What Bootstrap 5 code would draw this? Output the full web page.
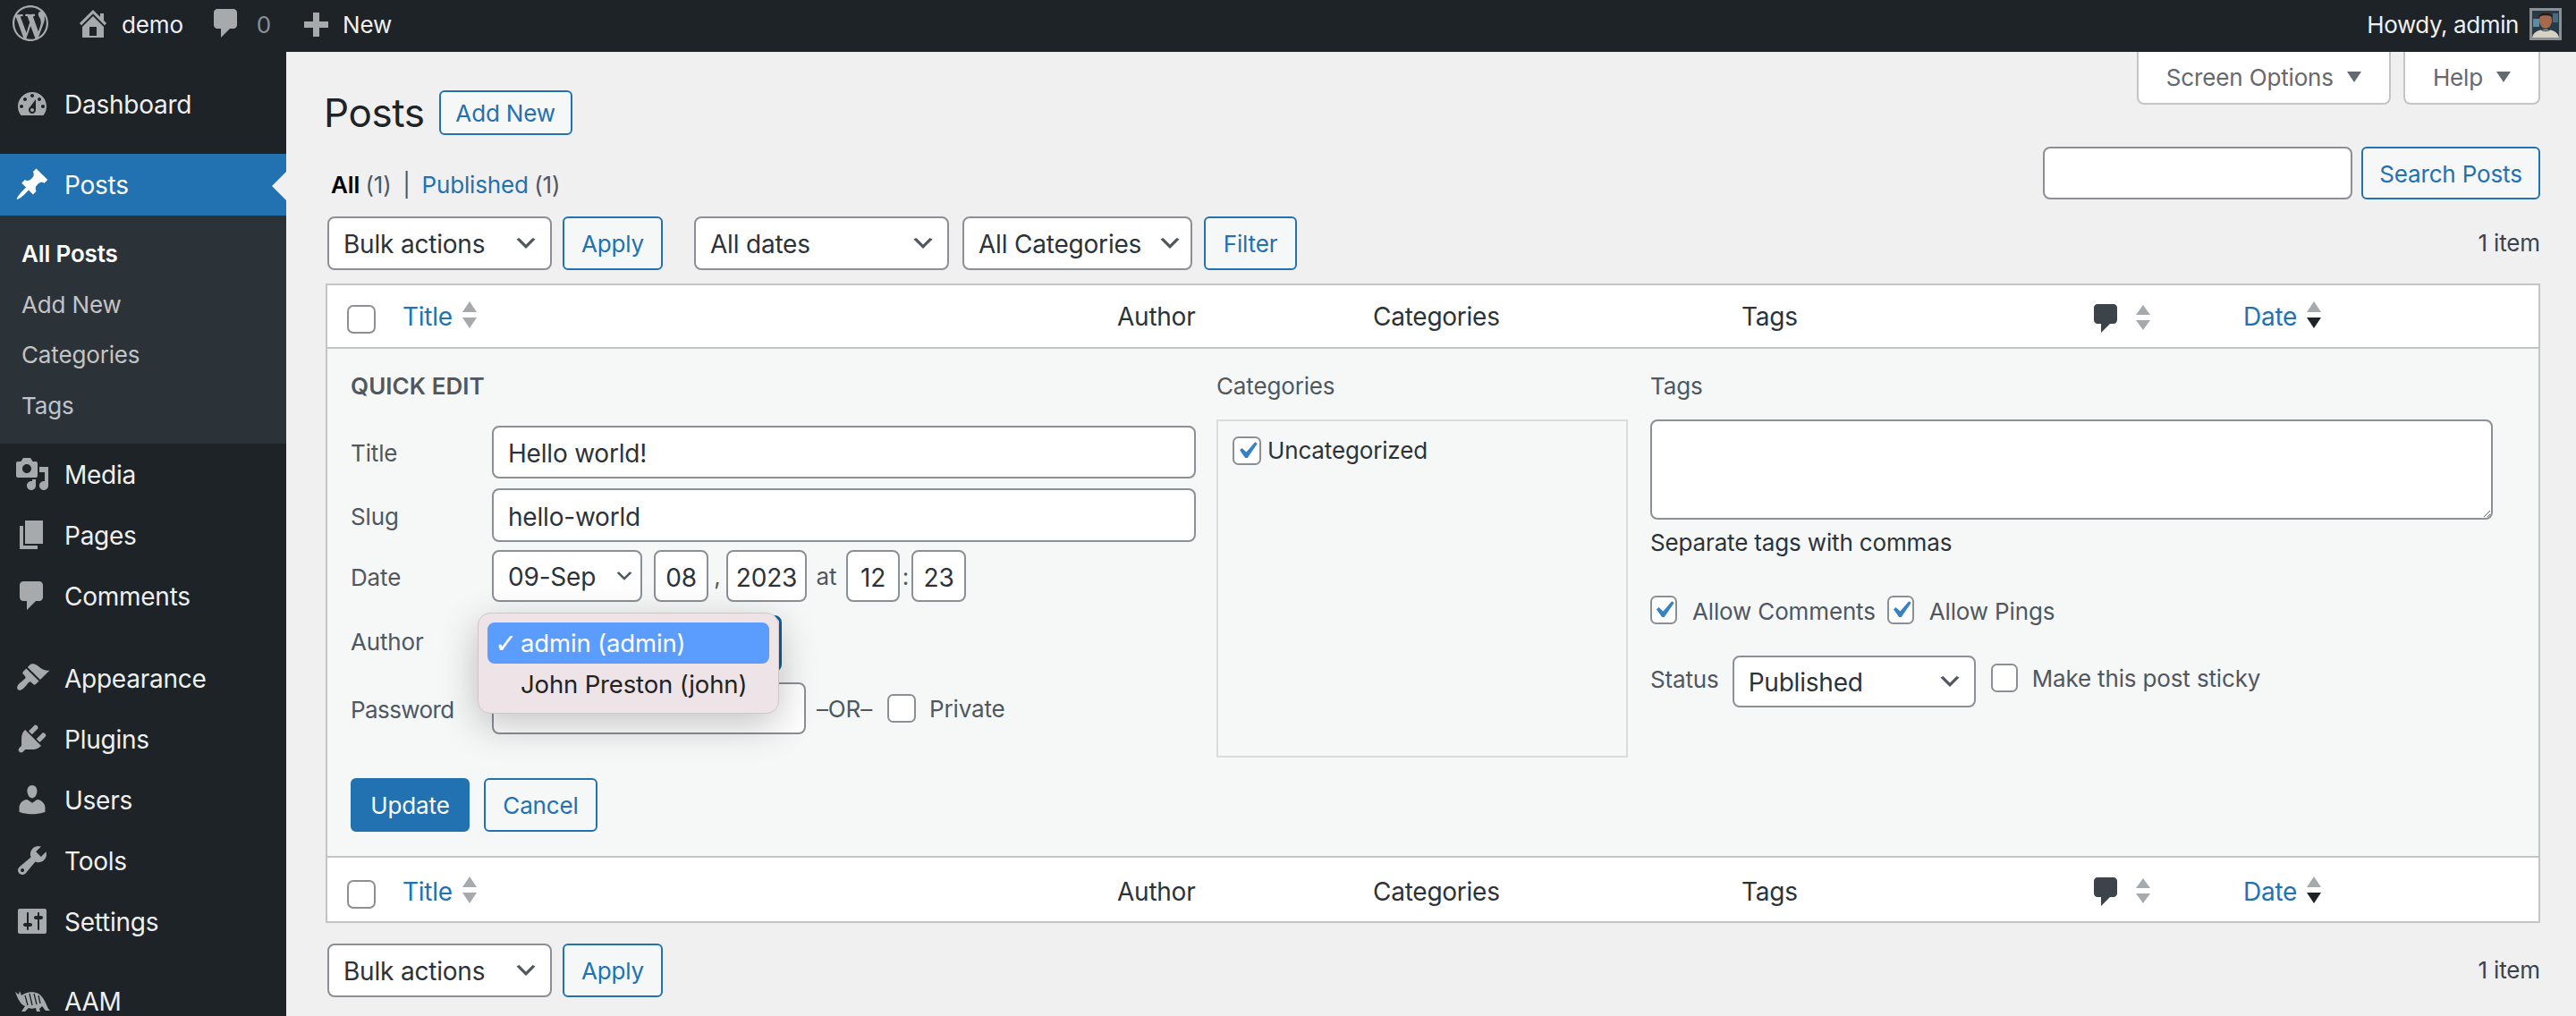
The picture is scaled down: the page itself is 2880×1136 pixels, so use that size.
<!doctype html>
<html lang="en">
<head>
<meta charset="utf-8">
<title>Posts</title>
<link href="https://cdn.jsdelivr.net/npm/bootstrap@5.3.0/dist/css/bootstrap.min.css" rel="stylesheet">
<style>
html,body{height:1136px;overflow:hidden}
body{font-family:Inter,"Liberation Sans",sans-serif;font-size:26px;line-height:32px;letter-spacing:-.15px;background:#f0f0f1;color:#3c434a}
a{text-decoration:none;color:#2271b1}
.adminbar{height:58px;background:#1d2327;color:#f0f0f1;padding-bottom:3px}
.adminbar svg{fill:#a7aaad;flex:none}
.ab-logo{margin-left:14px}.ab-home{margin-left:30px}.ab-demo{margin-left:12px}.ab-com{margin-left:28px}.ab-zero{margin-left:14px;color:#8c8f94}.ab-plus{margin-left:37px}.ab-new{margin-left:16px}
.ab-howdy{letter-spacing:-.4px}
.ab-avatar{margin:-2px 16px 0 12px}
.ab-logo,.ab-home,.ab-com{margin-top:-3px}
.layout{height:1078px}
.sidebar{width:320px;background:#1d2327;padding-top:25px;flex:none;overflow:hidden}
.menu-row{height:68px;color:#f0f0f1;padding-left:72px;position:relative;font-size:28px;letter-spacing:-.25px}
.menu-row span{display:block;padding-top:19px}
.menu-row:first-child span{padding-top:18px}
.menu-row svg{position:absolute;left:16px;top:14px;fill:#a7aaad}
.menu-row.active{height:69px;background:#2271b1;color:#fff;margin-top:21px}
.menu-row.active svg{fill:#fff;top:14px}
.menu-row.active::after{content:"";position:absolute;right:0;top:20px;border:16px solid transparent;border-right-color:#f0f0f1;border-left:0}
.submenu{background:#2c3338;padding:15px 0 13px 24px}
.submenu a{display:block;height:56.7px;line-height:56px;color:#c3c4c7}
.submenu a.current{color:#fff;font-weight:600}
.m-gap{margin-top:24px}.m-gap2{margin-top:21px}
.main{padding:0 40px 0 44px;min-width:0}
.tabs{gap:14px}
.tab{height:59px;background:#fff;border:2px solid #c3c4c7;border-top:0;border-radius:0 0 8px 8px;color:#646970;padding:0 31px;gap:15px}
.tab i{width:0;height:0;border:8px solid transparent;border-top:12px solid #646970;border-bottom:0;margin-top:-2px}
h1.page{font-size:44px;font-weight:400;line-height:50px;margin:0 0 0 -2px;color:#1d2327;letter-spacing:-.4px}
.title-row{margin-top:43px;gap:16px;height:50px}
.btn.btn-wp{--bs-btn-font-size:26px;--bs-btn-line-height:32px;--bs-btn-color:#2271b1;--bs-btn-bg:#f6f7f7;--bs-btn-border-color:#2271b1;--bs-btn-border-width:2px;--bs-btn-border-radius:6px;--bs-btn-hover-color:#135e96;--bs-btn-hover-bg:#f0f0f1;--bs-btn-hover-border-color:#135e96;display:inline-flex;align-items:center;justify-content:center;flex:none;padding:2px 0 0;letter-spacing:-.15px}
.btn.btn-wp.solid{--bs-btn-color:#fff;--bs-btn-bg:#2271b1;--bs-btn-hover-color:#fff;--bs-btn-hover-bg:#135e96}
.w-addnew{width:149px;height:50px}
.search-row{margin-top:13px;height:59px}
.views{margin:27px 0 0 6px;color:#50575e;white-space:pre;word-spacing:-.8px}
.views b{color:#000;font-weight:600}
.search-row .form-control{width:346px;height:59px}
.btn.btn-wp.w-search{width:200px;height:59px;margin-left:10px}
.form-control,.form-select{font-size:28px;line-height:32px;letter-spacing:-.2px;color:#2c3338;border:2px solid #8c8f94;border-radius:8px;padding:3px 16px 0;background-color:#fff;box-shadow:none}
.form-select{padding:1px 48px 0 16px;background-image:url("data:image/svg+xml,%3Csvg xmlns='http://www.w3.org/2000/svg' viewBox='0 0 20 20'%3E%3Cpath fill='%2350575e' d='M5 6l5 5 5-5 2 1-7 7-7-7 2-1z'/%3E%3C/svg%3E");background-size:30px 30px;background-position:right 12px center}
.tablenav{height:60px;align-items:stretch;padding-left:2px}
.tablenav.top{margin-top:19px}
.tablenav.bottom{margin-top:23px}
.w-bulk{width:251px;margin-right:12px}.btn.btn-wp.w-apply{width:112px}
.w-dates{width:285px;margin-left:35px;margin-right:15px}.form-select.w-cats{width:257px;margin-right:13px;padding-right:20px;background-position:right 8px center}.btn.btn-wp.w-filter{width:104px}
.items{margin-left:auto;align-self:center;color:#3c434a}
.wp-list{margin-top:15px;border:2px solid #c3c4c7;background:#fff}
.wp-list table{margin:0;table-layout:fixed;width:100%;--bs-table-bg:transparent;--bs-table-color:#2c3338}
.wp-list th{font-weight:400;font-size:28px;letter-spacing:-.25px;padding:0 0 0 14px;vertical-align:middle;border-bottom:0;height:69px;white-space:nowrap}
.wp-list tfoot th{height:71px;padding-top:4px}
.wp-list th a{display:inline-flex;align-items:center;gap:11px}
.sort{fill:#a7aaad;width:16px;height:30px;flex:none;margin-top:-4px}
.sort .on{fill:#1d2327}
.c-cb{width:70px}.c-title{width:799px}.c-author{width:286px}.c-cats{width:412px}.c-tags{width:393px}.c-com{width:168px}
.wp-list th.cb{padding-left:22px}
th.cb input{margin:6px 0 0}
.wp-list th.com{padding:11px 0 0 15px}
.wp-list tfoot th.com{padding-top:11px}
.com-wrap{gap:21px}
.form-check-input{width:32px;height:32px;border:2px solid #8c8f94;border-radius:8px;background-color:#fff;margin:0;flex:none}
.form-check-input:checked{background-color:#fff;border-color:#8c8f94;background-image:url("data:image/svg+xml,%3Csvg xmlns='http://www.w3.org/2000/svg' viewBox='0 0 20 20'%3E%3Cpath fill='%233582c4' d='M14.83 4.89l1.34.94-5.81 8.38H9.02L5.78 9.67l1.34-1.25 2.57 2.4z'/%3E%3C/svg%3E");background-size:38px 38px;background-position:center}
.com-ico{fill:#3c434a}
.qe{background:#f6f7f7;border-top:2px solid #c3c4c7;border-bottom:2px solid #c3c4c7;padding:26px 51px 27px 26px}
.qe-head{height:32px;color:#50575e}
.qe-title{font-size:26px;font-weight:600;text-transform:uppercase;color:#50575e;letter-spacing:.05px}
.qe-left{width:945px;flex:none}
.qe-cats{width:460px;flex:none;margin-left:23px}
.qe-tags{width:942px;flex:none;margin-left:25px}
.qe-row{align-items:center;position:relative}
.qe-row>label{width:158px;flex:none;color:#50575e;padding-top:3px}
.r-title{margin-top:28px;height:59px}.r-slug{margin-top:11px;height:60px}.r-date{margin-top:9px;height:58px}.r-author{margin-top:15px;height:63px}.r-pass{margin-top:12px;height:58px}
.r-author>label{padding-top:0;margin-top:-3px}
.r-pass>label{letter-spacing:-.6px}
.qe-row .form-control{height:100%}
.form-control.date-box{padding:3px 0 0;text-align:center;flex:none;width:61px}
.form-control.w-08{margin-left:13px}
.form-control.w-year{width:90px}
.form-control.w-hour{width:60px}
.form-select.sel-date{width:168px;height:58px;flex:none;padding:2px 24px 0 16px;background-position:right 6px center;background-size:24px 24px}
.sep{color:#50575e;flex:none;text-align:center;padding-top:2px}
.sep-comma{width:20px}.sep-at{width:44px}.sep-colon{width:13px}
.sel-author{width:324px;height:63px;border:3px solid #135e96}
.author-menu{position:absolute;left:142px;top:-3px;width:337px;height:113px;background:#eee4e7;border:1px solid #cfc8ca;border-radius:14px;padding:10px;box-shadow:0 12px 44px rgba(0,0,0,.24);font-size:27.5px;--bs-dropdown-min-width:0}
.author-menu .dropdown-item{height:46px;line-height:46px;padding:0 0 0 37px;border-radius:8px;color:#222;position:relative;letter-spacing:-.15px}
.author-menu .dropdown-item.active{background:#5b9dff;color:#fff}
.author-menu .dropdown-item.active::before{content:"\2713";position:absolute;left:8px;top:1px;font-size:30px;font-family:"DejaVu Sans",sans-serif;font-weight:700}
.author-menu .dropdown-item+.dropdown-item{margin-top:-1px}
.pw-input.form-control{width:351px;flex:none}
.or{margin-left:12px}
.cb-private{margin-left:17px}
.lbl-private{margin-left:15px}
.qe-actions{margin-top:49px;gap:16px;height:60px}
.btn.btn-wp.w-update{width:133px}.btn.btn-wp.w-cancel{width:127px}
.cat-box{margin-top:21px;height:378px;border:2px solid #dcdcde;padding:17px 16px;gap:7px;color:#2c3338}
.qe-tags .form-control{height:112px;display:block;margin-top:21px;padding:0 10px;width:100%}
.sep-note{margin-top:10px;color:#2c3338;height:32px}
.allow{margin-top:43px;gap:13px;color:#50575e;height:32px}
.allow input{width:30px}
.allow label{margin:3px 0 0 17px}
.status{margin-top:35px;height:58px;color:#50575e}
.status .form-select{width:272px;height:58px;margin-left:15px;flex:none}
.status input{width:30px;margin:-8px 16px 0 17px}
.status label{margin-top:-6px}
.status>span{margin-top:-4px}
</style>
</head>
<body>
<header class="adminbar d-flex align-items-center">
  <svg class="ab-logo" width="40" height="40" viewBox="0 0 20 20"><path d="M20 10c0-5.51-4.49-10-10-10C4.48 0 0 4.49 0 10c0 5.52 4.48 10 10 10 5.51 0 10-4.48 10-10zM7.78 15.37L4.37 6.22c.55-.02 1.17-.08 1.17-.08.5-.06.44-1.13-.06-1.11 0 0-1.45.11-2.37.11-.18 0-.37 0-.58-.01C4.12 2.69 6.87 1.11 10 1.11c2.33 0 4.45.87 6.05 2.34-.68-.11-1.65.39-1.65 1.58 0 .74.45 1.36.9 2.1.35.61.55 1.36.55 2.46 0 1.49-1.4 5-1.4 5l-3.03-8.37c.54-.02.82-.17.82-.17.5-.05.44-1.25-.06-1.22 0 0-1.44.12-2.38.12-.87 0-2.33-.12-2.33-.12-.5-.03-.56 1.2-.06 1.22l.92.08 1.26 3.41zM17.41 10c.24-.64.74-1.87.43-4.25.7 1.29 1.05 2.71 1.05 4.25 0 3.29-1.73 6.24-4.4 7.78.97-2.59 1.94-5.2 2.92-7.78zM6.1 18.09C3.12 16.65 1.11 13.53 1.11 10c0-1.3.23-2.48.72-3.59C3.25 10.3 4.67 14.2 6.1 18.09zm4.03-6.63l2.58 6.98c-.86.29-1.76.45-2.71.45-.79 0-1.57-.11-2.29-.33.81-2.38 1.62-4.74 2.42-7.1z"/></svg>
  <svg class="ab-home" width="40" height="40" viewBox="0 0 20 20"><path fill-rule="evenodd" d="M16 8.5l1.53 1.53-1.06 1.06L10 4.62l-6.47 6.47-1.06-1.06L10 2.5l4 4v-2h2v4zM10 6.04l6 5.99V18H4v-5.97zM12 17v-5H8v5h4z"/></svg>
  <span class="ab-demo">demo</span>
  <svg class="ab-com" width="40" height="40" viewBox="0 0 20 20"><path d="M5 2h9c1.1 0 2 .9 2 2v7c0 1.1-.9 2-2 2h-2l-5 5v-5H5c-1.1 0-2-.9-2-2V4c0-1.1.9-2 2-2z"/></svg>
  <span class="ab-zero">0</span>
  <svg class="ab-plus" width="27" height="27" viewBox="0 0 27 27"><path d="M10 0h7v10h10v7H17v10h-7V17H0v-7h10z"/></svg>
  <span class="ab-new">New</span>
  <span class="ms-auto ab-howdy">Howdy, admin</span>
  <svg class="ab-avatar" width="36" height="36" viewBox="0 0 36 36"><rect width="36" height="36" fill="#8d9093"/><rect x="3" y="3" width="30" height="30" fill="#263a48"/><rect x="4" y="12" width="7" height="9" fill="#5d8ba3"/><rect x="26" y="6" width="6" height="10" fill="#4a6b7c"/><ellipse cx="18" cy="14" rx="7" ry="9" fill="#a8684c"/><path d="M10 11c0-7 15-8 16 0l-2-2c-3-1-9-1-12 0z" fill="#241a16"/><path d="M3 33c1-6 7-9 15-9s14 3 15 9z" fill="#d6d2c6"/><path d="M13 24c2 2 8 2 10 0" stroke="#222" fill="none"/></svg>
</header>
<div class="layout d-flex">
  <nav class="sidebar">
    <div class="menu-row"><svg width="40" height="40" viewBox="0 0 20 20"><path fill-rule="evenodd" d="M3.76 16h12.48c1.1-1.37 1.76-3.11 1.76-5 0-4.42-3.58-8-8-8s-8 3.58-8 8c0 1.89.66 3.63 1.76 5zM10 4c.55 0 1 .45 1 1s-.45 1-1 1-1-.45-1-1 .45-1 1-1zM6 6c.55 0 1 .45 1 1s-.45 1-1 1-1-.45-1-1 .45-1 1-1zm8 0c.55 0 1 .45 1 1s-.45 1-1 1-1-.45-1-1 .45-1 1-1zm-5.37 5.55L12 7v6c0 1.1-.9 2-2 2s-2-.9-2-2c0-.57.24-1.08.63-1.45zM4 10c.55 0 1 .45 1 1s-.45 1-1 1-1-.45-1-1 .45-1 1-1zm12 0c.55 0 1 .45 1 1s-.45 1-1 1-1-.45-1-1 .45-1 1-1zm-5 3c0-.55-.45-1-1-1s-1 .45-1 1 .45 1 1 1 1-.45 1-1z"/></svg><span>Dashboard</span></div>
    <div class="menu-row active"><svg width="40" height="40" viewBox="0 0 20 20"><path d="M10.44 3.02l1.82-1.82 6.36 6.35-1.83 1.82c-1.05-.68-2.48-.57-3.41.36l-.75.75c-.92.93-1.04 2.35-.35 3.41l-1.83 1.82-2.41-2.41-2.8 2.79c-.42.42-3.38 2.71-3.8 2.29s1.86-3.39 2.28-3.81l2.79-2.79L4.1 9.36l1.83-1.82c1.05.69 2.48.57 3.4-.36l.75-.75c.93-.92 1.05-2.35.36-3.41z"/></svg><span>Posts</span></div>
    <div class="submenu">
      <a class="current" href="#">All Posts</a>
      <a href="#">Add New</a>
      <a href="#">Categories</a>
      <a href="#">Tags</a>
    </div>
    <div class="menu-row"><svg width="40" height="40" viewBox="0 0 20 20"><path fill-rule="evenodd" d="M13 11V4c0-.55-.45-1-1-1h-1.67L9 1H5L3.67 3H2c-.55 0-1 .45-1 1v7c0 .55.45 1 1 1h10c.55 0 1-.45 1-1zM7 4.5c1.38 0 2.5 1.12 2.5 2.5S8.38 9.5 7 9.5 4.5 8.38 4.5 7 5.62 4.5 7 4.5zM14 6h5v10.5c0 1.38-1.12 2.5-2.5 2.5S14 17.88 14 16.5s1.12-2.5 2.5-2.5c.17 0 .34.02.5.05V9h-3V6zm-4 8.05V13h2v3.5c0 1.38-1.12 2.5-2.5 2.5S7 17.88 7 16.5 8.12 14 9.5 14c.17 0 .34.02.5.05z"/></svg><span>Media</span></div>
    <div class="menu-row"><svg width="40" height="40" viewBox="0 0 20 20"><path d="M6 15V2h10v13H6zm-1 1h8v2H3V5h2v11z"/></svg><span>Pages</span></div>
    <div class="menu-row"><svg width="40" height="40" viewBox="0 0 20 20"><path d="M5 2h9c1.1 0 2 .9 2 2v7c0 1.1-.9 2-2 2h-2l-5 5v-5H5c-1.1 0-2-.9-2-2V4c0-1.1.9-2 2-2z"/></svg><span>Comments</span></div>
    <div class="menu-row m-gap"><svg width="40" height="40" viewBox="0 0 20 20"><path d="M14.48 11.06L7.41 3.99l1.5-1.5c.5-.56 2.3-.47 3.51.32 1.21.8 1.43 1.28 2.91 2.1 1.18.64 2.45 1.26 4.45.85zm-.71.71L6.7 4.7 4.93 6.47c-.39.39-.39 1.02 0 1.41l1.06 1.06c.39.39.39 1.03 0 1.42-.6.6-2.47 1.99-3.33 2.85-.87.87-1.65 2.24-.66 3.23.99.99 2.36.21 3.23-.66.86-.86 2.25-2.73 2.85-3.33.39-.39 1.03-.39 1.42 0l1.06 1.06c.39.39 1.02.39 1.41 0z"/></svg><span>Appearance</span></div>
    <div class="menu-row"><svg width="40" height="40" viewBox="0 0 20 20"><path d="M13.11 4.36L9.87 7.6 8 5.73l3.24-3.24c.35-.34 1.05-.2 1.56.32.52.51.66 1.21.31 1.55zm-8 1.77l.91-1.12 9.01 9.01-1.19.84c-.71.71-2.63 1.16-3.82 1.16H6.14L4.9 17.26c-.59.59-1.54.59-2.12 0-.59-.58-.59-1.53 0-2.12l1.24-1.24v-3.88c0-1.13.4-3.19 1.09-3.89zm7.26 3.97l3.24-3.24c.34-.35 1.04-.21 1.55.31.52.51.66 1.21.31 1.55l-3.24 3.25z"/></svg><span>Plugins</span></div>
    <div class="menu-row"><svg width="40" height="40" viewBox="0 0 20 20"><path d="M10 9.25c-2.27 0-2.73-3.44-2.73-3.44C7 4.02 7.82 2 9.97 2c2.16 0 2.98 2.02 2.71 3.81 0 0-.41 3.44-2.68 3.44zm0 2.57L12.72 10c2.39 0 4.52 2.33 4.52 4.53v2.49s-3.65 1.13-7.24 1.13c-3.65 0-7.24-1.13-7.24-1.13v-2.49c0-2.25 1.94-4.48 4.47-4.48z"/></svg><span>Users</span></div>
    <div class="menu-row"><svg width="40" height="40" viewBox="0 0 20 20"><path fill-rule="evenodd" d="M16.68 9.77c-1.34 1.34-3.3 1.67-4.95.99l-5.41 6.52c-.99.99-2.59.99-3.58 0s-.99-2.59 0-3.57l6.52-5.42c-.68-1.65-.35-3.61.99-4.95 1.28-1.28 3.12-1.62 4.72-1.06l-2.89 2.89 2.82 2.82 2.86-2.87c.53 1.58.18 3.39-1.08 4.65zM3.81 16.21c.4.39 1.04.39 1.43 0 .4-.4.4-1.04 0-1.43-.39-.4-1.03-.4-1.43 0-.39.39-.39 1.03 0 1.43z"/></svg><span>Tools</span></div>
    <div class="menu-row"><svg width="40" height="40" viewBox="0 0 20 20"><path fill-rule="evenodd" d="M18 16V4c0-.55-.45-1-1-1H3c-.55 0-1 .45-1 1v12c0 .55.45 1 1 1h14c.55 0 1-.45 1-1zM8 11h1c.55 0 1 .45 1 1s-.45 1-1 1H8v1.5c0 .28-.22.5-.5.5s-.5-.22-.5-.5V13H6c-.55 0-1-.45-1-1s.45-1 1-1h1V5.5c0-.28.22-.5.5-.5s.5.22.5.5V11zm5-2h-1c-.55 0-1-.45-1-1s.45-1 1-1h1V5.5c0-.28.22-.5.5-.5s.5.22.5.5V7h1c.55 0 1 .45 1 1s-.45 1-1 1h-1v5.5c0 .28-.22.5-.5.5s-.5-.22-.5-.5V9z"/></svg><span>Settings</span></div>
    <div class="menu-row m-gap2"><svg width="40" height="40" viewBox="0 0 40 24"><path d="M3 7l-2-5 4 3 1-4 2 5c5-4 13-5 19-2 5 3 8 10 11 17l2 2h-5l-4-5-3 3 1 3h-4l-1-4c-3 1-6 1-8 0l-4 4H8l4-6c-3-1-6-4-9-11z"/><path d="M12 6l3 11M17 4l3 13M22 4l3 12M27 6l2 9" stroke="#1d2327" stroke-width="1.3" fill="none"/></svg><span>AAM</span></div>
  </nav>
  <main class="main flex-grow-1">
    <div class="tabs d-flex float-end">
      <a class="tab d-flex align-items-center" href="#">Screen Options<i></i></a>
      <a class="tab d-flex align-items-center" href="#">Help<i></i></a>
    </div>
    <div class="title-row d-flex align-items-center">
      <h1 class="page">Posts</h1>
      <a class="btn btn-wp w-addnew" href="#">Add New</a>
    </div>
    <div class="search-row d-flex justify-content-between">
      <div class="views"><b>All</b> (1)  |  <a href="#">Published</a> (1)</div>
      <div class="d-flex">
        <input class="form-control" type="search" aria-label="Search">
        <button class="btn btn-wp w-search" type="button">Search Posts</button>
      </div>
    </div>
    <div class="tablenav top d-flex">
      <select class="form-select w-bulk"><option>Bulk actions</option></select>
      <button class="btn btn-wp w-apply" type="button">Apply</button>
      <select class="form-select w-dates"><option>All dates</option></select>
      <select class="form-select w-cats"><option>All Categories</option></select>
      <button class="btn btn-wp w-filter" type="button">Filter</button>
      <span class="items">1 item</span>
    </div>
    <div class="wp-list">
      <table class="table">
        <colgroup><col class="c-cb"><col class="c-title"><col class="c-author"><col class="c-cats"><col class="c-tags"><col class="c-com"><col></colgroup>
        <thead>
          <tr>
            <th class="cb"><input class="form-check-input" type="checkbox" aria-label="Select all"></th>
            <th><a href="#">Title <svg class="sort" viewBox="0 0 16 30"><path d="M8 0l8 12H0zM0 18h16l-8 12z"/></svg></a></th>
            <th>Author</th><th>Categories</th><th>Tags</th>
            <th class="com"><span class="d-inline-flex align-items-center com-wrap"><svg class="com-ico" width="26" height="32" viewBox="3 2 13 16"><path d="M5 2h9c1.1 0 2 .9 2 2v7c0 1.1-.9 2-2 2h-2l-5 5v-5H5c-1.1 0-2-.9-2-2V4c0-1.1.9-2 2-2z"/></svg><svg class="sort" viewBox="0 0 16 30"><path d="M8 2l8 11H0zM0 19h16l-8 11z"/></svg></span></th>
            <th><a href="#">Date <svg class="sort" viewBox="0 0 16 30"><path d="M8 0l8 12H0z"/><path class="on" d="M0 18h16l-8 12z"/></svg></a></th>
          </tr>
        </thead>
        <tbody>
          <tr><td colspan="7" class="p-0 border-0">
            <div class="qe d-flex">
              <section class="qe-left">
                <div class="qe-head qe-title">Quick Edit</div>
                <div class="qe-row d-flex r-title"><label>Title</label><input class="form-control flex-grow-1" value="Hello world!"></div>
                <div class="qe-row d-flex r-slug"><label>Slug</label><input class="form-control flex-grow-1" value="hello-world"></div>
                <div class="qe-row d-flex r-date"><label>Date</label>
                  <select class="form-select sel-date"><option>09-Sep</option></select>
                  <input class="form-control date-box w-08" value="08">
                  <span class="sep sep-comma">,</span>
                  <input class="form-control date-box w-year" value="2023">
                  <span class="sep sep-at">at</span>
                  <input class="form-control date-box w-hour" value="12">
                  <span class="sep sep-colon">:</span>
                  <input class="form-control date-box" value="23">
                </div>
                <div class="qe-row d-flex r-author"><label>Author</label>
                  <select class="form-select sel-author"><option>admin (admin)</option></select>
                  <ul class="dropdown-menu show author-menu list-unstyled m-0">
                    <li><span class="dropdown-item active">admin (admin)</span></li>
                    <li><span class="dropdown-item">John Preston (john)</span></li>
                  </ul>
                </div>
                <div class="qe-row d-flex r-pass"><label>Password</label>
                  <input class="form-control pw-input" type="text">
                  <span class="sep or">&ndash;OR&ndash;</span>
                  <input class="form-check-input cb-private" type="checkbox" aria-label="Private">
                  <span class="sep lbl-private">Private</span>
                </div>
                <div class="qe-actions d-flex">
                  <button class="btn btn-wp solid w-update" type="button">Update</button>
                  <button class="btn btn-wp w-cancel" type="button">Cancel</button>
                </div>
              </section>
              <section class="qe-cats">
                <div class="qe-head">Categories</div>
                <div class="cat-box d-flex align-items-start"><input class="form-check-input" type="checkbox" checked aria-label="Uncategorized"><span>Uncategorized</span></div>
              </section>
              <section class="qe-tags">
                <div class="qe-head">Tags</div>
                <textarea class="form-control" aria-label="Tags"></textarea>
                <div class="sep-note">Separate tags with commas</div>
                <div class="allow d-flex align-items-center">
                  <div class="d-flex align-items-center"><input class="form-check-input" type="checkbox" checked aria-label="Allow Comments"><label>Allow Comments</label></div>
                  <div class="d-flex align-items-center"><input class="form-check-input" type="checkbox" checked aria-label="Allow Pings"><label>Allow Pings</label></div>
                </div>
                <div class="status d-flex align-items-center">
                  <span>Status</span>
                  <select class="form-select"><option>Published</option></select>
                  <input class="form-check-input" type="checkbox" aria-label="Make this post sticky">
                  <label>Make this post sticky</label>
                </div>
              </section>
            </div>
          </td></tr>
        </tbody>
        <tfoot>
          <tr>
            <th class="cb"><input class="form-check-input" type="checkbox" aria-label="Select all"></th>
            <th><a href="#">Title <svg class="sort" viewBox="0 0 16 30"><path d="M8 0l8 12H0zM0 18h16l-8 12z"/></svg></a></th>
            <th>Author</th><th>Categories</th><th>Tags</th>
            <th class="com"><span class="d-inline-flex align-items-center com-wrap"><svg class="com-ico" width="26" height="32" viewBox="3 2 13 16"><path d="M5 2h9c1.1 0 2 .9 2 2v7c0 1.1-.9 2-2 2h-2l-5 5v-5H5c-1.1 0-2-.9-2-2V4c0-1.1.9-2 2-2z"/></svg><svg class="sort" viewBox="0 0 16 30"><path d="M8 2l8 11H0zM0 19h16l-8 11z"/></svg></span></th>
            <th><a href="#">Date <svg class="sort" viewBox="0 0 16 30"><path d="M8 0l8 12H0z"/><path class="on" d="M0 18h16l-8 12z"/></svg></a></th>
          </tr>
        </tfoot>
      </table>
    </div>
    <div class="tablenav bottom d-flex">
      <select class="form-select w-bulk"><option>Bulk actions</option></select>
      <button class="btn btn-wp w-apply" type="button">Apply</button>
      <span class="items">1 item</span>
    </div>
  </main>
</div>
<script src="https://cdn.jsdelivr.net/npm/bootstrap@5.3.0/dist/js/bootstrap.bundle.min.js"></script>
</body>
</html>
